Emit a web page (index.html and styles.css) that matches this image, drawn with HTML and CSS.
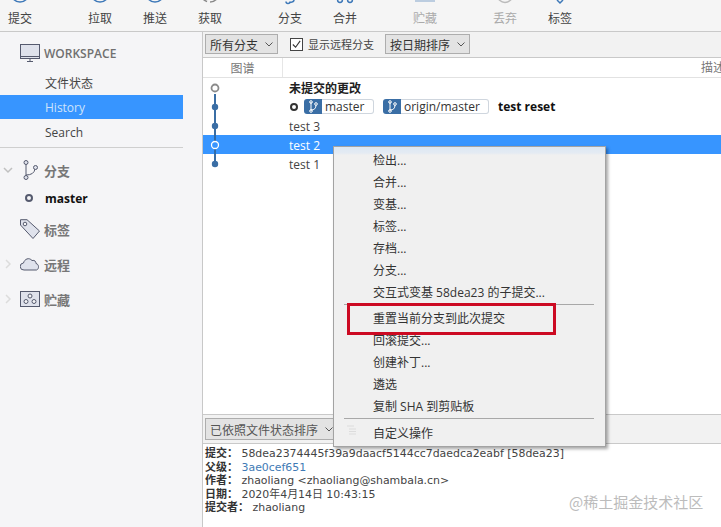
FILE: index.html
```html
<!DOCTYPE html>
<html lang="zh">
<head>
<meta charset="utf-8">
<title>SourceTree History</title>
<link rel="stylesheet" href="styles.css">
</head>
<body>
<div class="app">
  <header class="toolbar">
    <div class="tool-group">
      <div class="tool"><svg class="tool-icon" viewBox="0 0 24 5"><circle cx="12" cy="-7" r="9" class="ic-blue"/></svg><span>提交</span></div>
    </div>
    <div class="tool-group">
      <div class="tool"><svg class="tool-icon" viewBox="0 0 24 5"><circle cx="12" cy="-7" r="9" class="ic-blue"/></svg><span>拉取</span></div>
      <div class="tool"><svg class="tool-icon" viewBox="0 0 24 5"><circle cx="12" cy="-7" r="9" class="ic-blue"/></svg><span>推送</span></div>
      <div class="tool"><svg class="tool-icon" viewBox="0 0 24 5"><circle cx="12" cy="-7" r="9" class="ic-gray" stroke-dasharray="14 3"/></svg><span>获取</span></div>
    </div>
    <div class="tool-group">
      <div class="tool"><svg class="tool-icon" viewBox="0 0 24 5"><path d="M8 1.500a2 2 0 0 0 4 0M16 0q0 2-4 2.500" class="ic-blue"/></svg><span>分支</span></div>
      <div class="tool"><svg class="tool-icon" viewBox="0 0 24 5"><circle cx="7" cy="0" r="2.400" class="ic-blue"/><circle cx="17" cy="0" r="2.400" class="ic-blue"/></svg><span>合并</span></div>
    </div>
    <div class="tool-group">
      <div class="tool tool-off"><svg class="tool-icon" viewBox="0 0 24 5"><path d="M2 1h20" class="ic-blue"/></svg><span>贮藏</span></div>
    </div>
    <div class="tool-group">
      <div class="tool tool-off"><svg class="tool-icon" viewBox="0 0 24 5"><circle cx="12" cy="-5" r="7.500" class="ic-gray"/></svg><span>丢弃</span></div>
      <div class="tool"><svg class="tool-icon" viewBox="0 0 24 5"><path d="M9 0l3 3 3-3" class="ic-blue"/></svg><span>标签</span></div>
    </div>
  </header>

  <div class="body">
    <aside class="sidebar">
      <div class="side-head">
        <svg class="side-icon" viewBox="0 0 20 18"><rect x="0.500" y="0.500" width="19" height="14" class="ic-fill"/><path d="M0.500 12.500h19M7 17.500h6M10 15v2" class="ic-line"/></svg>
        <span>WORKSPACE</span>
      </div>
      <div class="side-item">文件状态</div>
      <div class="side-item side-active">History</div>
      <div class="side-item side-last">Search</div>
      <div class="side-rule"></div>

      <div class="side-section side-first">
        <svg class="caret" viewBox="0 0 10 10"><path d="M1 3l4 4 4-4"/></svg>
        <svg class="side-icon" viewBox="0 0 20 20"><path d="M6 4v12M6 15q8 0 9-6" class="ic-line"/><circle cx="6" cy="2.500" r="2" class="ic-fill"/><circle cx="6" cy="17.500" r="2" class="ic-fill"/><circle cx="15.500" cy="7.500" r="2" class="ic-fill"/></svg>
        <span>分支</span>
      </div>
      <div class="side-branch"><i class="head-dot"></i><b>master</b></div>
      <div class="side-section">
        <span class="caret"></span>
        <svg class="side-icon" viewBox="0 0 20 20"><path d="M0.500 6V0.700H7L19.500 12 13 19.500z" class="ic-fill"/><circle cx="5" cy="5" r="1.800" class="ic-white"/></svg>
        <span>标签</span>
      </div>
      <div class="side-section">
        <svg class="caret caret-pale" viewBox="0 0 10 10"><path d="M3 1l4 4-4 4"/></svg>
        <svg class="side-icon" viewBox="0 0 20 20"><path d="M4 16a3.500 3.500 0 0 1-.5-7C4.500 5 9 3 12 6.500c3-.8 4 1.500 4 3 3 .5 3.500 5.500.5 6.500z" class="ic-fill"/></svg>
        <span>远程</span>
      </div>
      <div class="side-section">
        <svg class="caret caret-pale" viewBox="0 0 10 10"><path d="M3 1l4 4-4 4"/></svg>
        <svg class="side-icon" viewBox="0 0 20 16"><rect x="0.500" y="0.500" width="19" height="15" class="ic-fill"/><circle cx="10" cy="5" r="2" class="ic-white"/><circle cx="6" cy="10.500" r="2" class="ic-white"/><circle cx="14" cy="10.500" r="2" class="ic-white"/></svg>
        <span>贮藏</span>
      </div>
    </aside>

    <main class="main">
      <div class="filters">
        <div class="combo combo-branch"><span>所有分支</span><svg class="chev" viewBox="0 0 8 5"><path d="M0.500 0.500L4 4l3.500-3.500"/></svg></div>
        <label class="check"><span class="box"><svg viewBox="0 0 12 12"><path d="M2 6l3 3 5-7"/></svg></span>显示远程分支</label>
        <div class="combo combo-date"><span>按日期排序</span><svg class="chev" viewBox="0 0 8 5"><path d="M0.500 0.500L4 4l3.500-3.500"/></svg></div>
      </div>
      <div class="columns">
        <div class="col-graph">图谱</div>
        <div class="col-desc">描述</div>
      </div>
      <div class="rows">
        <div class="row row-bold">
          <svg class="graph" viewBox="0 0 24 19"><path d="M12 16v3" class="edge"/><circle cx="12" cy="10" r="3.500" class="node-open"/></svg>
          <span>未提交的更改</span>
        </div>
        <div class="row">
          <svg class="graph" viewBox="0 0 24 19"><path d="M12 0v19" class="edge"/><circle cx="12" cy="10" r="3.200" class="node"/></svg>
          <i class="head-dot head-dot-row"></i>
          <span class="ref">
            <span class="ref-icon"><svg viewBox="0 0 18 15"><path d="M7 3v9M7 11q5 0 5-5" class="ref-line"/><circle cx="7" cy="3" r="1.300" class="ref-line"/><circle cx="7" cy="12" r="1.300" class="ref-line"/><circle cx="12" cy="5" r="1.300" class="ref-line"/></svg></span>
            <span class="ref-name ref-master">master</span>
          </span>
          <span class="ref">
            <span class="ref-icon"><svg viewBox="0 0 18 15"><path d="M7 3v9M7 11q5 0 5-5" class="ref-line"/><circle cx="7" cy="3" r="1.300" class="ref-line"/><circle cx="7" cy="12" r="1.300" class="ref-line"/><circle cx="12" cy="5" r="1.300" class="ref-line"/></svg></span>
            <span class="ref-name ref-origin">origin/master</span>
          </span>
          <b class="msg-bold">test reset</b>
        </div>
        <div class="row">
          <svg class="graph" viewBox="0 0 24 19"><path d="M12 0v19" class="edge"/><circle cx="12" cy="10" r="3.200" class="node"/></svg>
          <span class="row-text">test 3</span>
        </div>
        <div class="row row-selected">
          <svg class="graph" viewBox="0 0 24 19"><path d="M12 0v19" class="edge-selected"/><circle cx="12" cy="10" r="3.500" class="node-selected"/></svg>
          <span class="row-text">test 2</span>
        </div>
        <div class="row">
          <svg class="graph" viewBox="0 0 24 19"><path d="M12 0v10" class="edge"/><circle cx="12" cy="10" r="3.200" class="node"/></svg>
          <span class="row-text">test 1</span>
        </div>
      </div>
      <div class="sortbar">
        <div class="combo combo-sort"><span>已依照文件状态排序</span><svg class="chev" viewBox="0 0 8 5"><path d="M0.500 0.500L4 4l3.500-3.500"/></svg></div>
      </div>
      <div class="details">
        <div class="detail-line"><b>提交：</b> 58dea2374445f39a9daacf5144cc7daedca2eabf [58dea23]</div>
        <div class="detail-line"><b>父级：</b> <span class="link">3ae0cef651</span></div>
        <div class="detail-line"><b>作者：</b> zhaoliang &lt;zhaoliang@shambala.cn&gt;</div>
        <div class="detail-line"><b>日期：</b> 2020年4月14日 10:43:15</div>
        <div class="detail-line"><b>提交者：</b> zhaoliang</div>
      </div>
    </main>
  </div>

  <nav class="menu">
    <div class="menu-item">检出...</div>
    <div class="menu-item">合并...</div>
    <div class="menu-item">变基...</div>
    <div class="menu-item">标签...</div>
    <div class="menu-item">存档...</div>
    <div class="menu-item">分支...</div>
    <div class="menu-item">交互式变基 58dea23 的子提交...</div>
    <div class="menu-sep"></div>
    <div class="menu-item">重置当前分支到此次提交</div>
    <div class="menu-item">回滚提交...</div>
    <div class="menu-item">创建补丁...</div>
    <div class="menu-item">遴选</div>
    <div class="menu-item">复制 SHA 到剪贴板</div>
    <div class="menu-sep menu-sep-wide"></div>
    <div class="menu-item">自定义操作</div>
    <svg class="ghost" viewBox="0 0 10 10"><path d="M0 1h7M2 4h7M2 6.500h7M2 9h7"/></svg>
  </nav>
  <div class="callout"></div>
  <div class="watermark">@稀土掘金技术社区</div>
</div>
</body>
</html>
```

FILE: styles.css
```css
* { box-sizing: border-box; }
html, body { margin: 0; height: 100%; }
body {
  font-family: "Open Sans", "Noto Sans CJK SC", sans-serif;
  font-size: 12px;
  color: #333;
  background: #fff;
  overflow: hidden;
}
b { font-weight: 700; }
svg { display: block; }

.app { position: relative; width: 721px; height: 527px; display: flex; flex-direction: column; overflow: hidden; }

/* toolbar */
.toolbar { flex: none; height: 32px; display: flex; gap: 40px; background: #f5f5f5; border-bottom: 1px solid #c9c9c9; }
.tool-group { display: flex; gap: 15px; }
.tool { width: 40px; display: flex; flex-direction: column; align-items: center; line-height: 18px; color: #444; }
.tool-off { color: #aaa; }
.tool-icon { width: 24px; height: 5px; margin-bottom: 5px; flex: none; fill: none; }
.ic-blue { fill: none; stroke: #3d78b8; stroke-width: 1.500; }
.ic-gray { fill: none; stroke: #888; stroke-width: 1.500; }
.tool-off .ic-blue { stroke: #a9bfd8; }
.tool-off .ic-gray { stroke: #bbb; }

.body { flex: 1; display: flex; min-height: 0; }

/* sidebar */
.sidebar { flex: none; width: 203px; background: #f5f5f7; border-right: 1px solid #c8c8c8; padding-top: 6px; padding-right: 19px; color: #555; }
.side-head { height: 30px; margin-bottom: 3px; padding-left: 20px; display: flex; align-items: center; gap: 4px; color: #707070; font-weight: 600; }
.side-icon { width: 20px; flex: none; }
.ic-fill { fill: #dfe2ec; stroke: #555a6e; stroke-width: 1; }
.ic-line { fill: none; stroke: #555a6e; stroke-width: 1; }
.ic-white { fill: #f5f5f7; stroke: #555a6e; stroke-width: 1; }
.side-item { height: 24px; line-height: 26px; padding-left: 45px; color: #444; }
.side-active { background: #3795ff; color: #cfe3fb; }
.side-last { margin-top: 1px; }
.side-rule { height: 1px; margin-top: 3px; background: #cfcfcf; }
.side-section { height: 30px; margin-top: 5px; display: flex; align-items: center; font-size: 13px; font-weight: 700; color: #777; }
.side-first { margin-top: 7px; }
.side-section span:last-child { margin-left: 4px; }
.caret { width: 10px; height: 10px; margin: 0 7px 0 3px; flex: none; fill: none; stroke: #c0c0c0; stroke-width: 1.500; }
.caret-pale { stroke: #dcdcdc; }
.side-branch { height: 24px; margin-top: 1px; margin-bottom: -1px; padding-left: 25px; display: flex; align-items: center; color: #111; }
.side-branch b { margin-left: 12px; }
.head-dot { width: 8px; height: 8px; border: 2px solid #555a6e; border-radius: 50%; flex: none; }
.head-dot-row { border-color: #333; margin: 0 6px 0 1px; }

/* main */
.main { flex: 1; min-width: 0; display: flex; flex-direction: column; }
.filters { flex: none; height: 26px; padding: 2px 2px 0; display: flex; align-items: flex-start; background: #f2f2f2; border-bottom: 1px solid #c9c9c9; color: #333; }
.combo { height: 20px; padding-left: 4px; display: flex; align-items: center; background: #e3e3e3; border: 1px solid #adadad; white-space: nowrap; }
.combo span { padding-top: 2px; }
.combo-branch { width: 73px; }
.combo-date { width: 85px; margin-left: 11px; }
.combo-sort { width: 135px; height: 22px; color: #555; }
.chev { width: 8px; height: 5px; margin-left: 7px; fill: none; stroke: #555; stroke-width: 1; }
.check { height: 20px; margin-left: 12px; display: flex; align-items: center; gap: 5px; font-size: 11px; color: #444; white-space: nowrap; }
.box { width: 13px; height: 13px; background: #fff; border: 1px solid #444; padding: 0; }
.box svg { width: 11px; height: 11px; fill: none; stroke: #333; stroke-width: 1.200; }

.columns { flex: none; height: 20px; display: flex; align-items: center; justify-content: space-between; color: #777; border-bottom: 1px solid #e2e2e2; background: #fff; }
.col-graph { width: 80px; height: 19px; line-height: 21px; text-align: center; border-right: 1px solid #e6e6e6; }
.col-desc { margin-right: -4px; width: 24px; line-height: 21px; white-space: nowrap; }

.rows { flex: 1; min-height: 0; background: #fff; }
.row { height: 19px; display: flex; align-items: center; padding-right: 10px; color: #444; }
.row-text { padding-top: 2px; }
.row-bold { color: #222; font-weight: 700; }
.row-selected { background: #3795ff; color: #fff; font-weight: 500; }
.graph { width: 24px; height: 19px; margin-right: 62px; flex: none; }
.edge { stroke: #3a6ea5; stroke-width: 2; fill: none; }
.edge-selected { stroke: #2f6aa8; stroke-width: 2; fill: none; }
.node { fill: #3a6ea5; }
.node-open { fill: #fff; stroke: #8a8a8a; stroke-width: 1.800; }
.node-selected { fill: #3795ff; stroke: #fff; stroke-width: 1.300; }
.ref { height: 15px; margin-right: 9px; display: flex; flex: none; }
.ref-icon { width: 18px; height: 15px; background: #3a6ea5; border-radius: 3px 0 0 3px; flex: none; }
.ref-icon svg { width: 18px; height: 15px; }
.ref-line { fill: none; stroke: #fff; stroke-width: 1; }
.ref-name { padding-left: 3px; line-height: 14px; color: #333; background: #fff; border: 1px solid #cfd6de; border-left: 0; border-radius: 0 3px 3px 0; }
.ref-master { width: 52px; }
.ref-origin { width: 88px; }
.msg-bold { color: #111; }

.sortbar { flex: none; height: 30px; padding: 3px 2px 0; background: #f2f2f2; border-top: 1px solid #c9c9c9; border-bottom: 1px solid #c9c9c9; }
.details { flex: none; height: 83px; padding: 2px 2px 0; font-family: "DejaVu Sans", "Noto Sans CJK SC", sans-serif; font-size: 10.930px; color: #444; background: #fff; white-space: nowrap; }
.detail-line { height: 13.500px; line-height: 13.500px; overflow: visible; }
.details b { color: #333; font-family: "Noto Sans CJK SC", sans-serif; font-size: 11px; font-weight: 700; line-height: 13px; }
.link { color: #3f7ab5; }

/* context menu */
.menu {
  position: absolute; left: 333px; top: 146px; width: 273px; height: 301px;
  padding-top: 3px;
  background: linear-gradient(#dde8f3 0, #e4ebf3 6px, #f0f0f0 8px);
  border: 1px solid #a3a3a3;
  box-shadow: 2px 2px 3px rgba(0, 0, 0, .35);
  color: #333;
}
.menu-item { height: 22px; line-height: 22px; padding-left: 39px; white-space: nowrap; }
.menu-sep { height: 4px; margin: 0 11px 0 10px; }
.menu-sep::before { content: ""; display: block; height: 1px; background: #a8a8a8; }
.menu-sep-wide { height: 5px; }
.ghost { position: absolute; left: 13px; top: 278px; width: 10px; height: 10px; fill: none; stroke: #dcdcdc; stroke-width: 1; }

.callout { position: absolute; left: 347px; top: 303px; width: 209px; height: 32px; border: 3px solid #cc0a22; }
.watermark { position: absolute; left: 569px; top: 492px; font-size: 15px; line-height: 20px; color: #bcbcbc; font-family: "Noto Sans CJK SC", sans-serif; white-space: nowrap; }
```
